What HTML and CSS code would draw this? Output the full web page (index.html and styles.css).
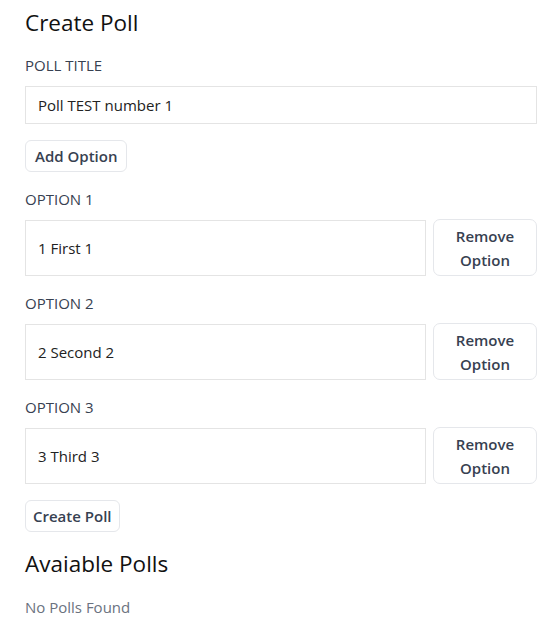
FILE: index.html
```html
<!DOCTYPE html>
<html>
<head>
<meta charset="utf-8">
<link rel="stylesheet" href="styles.css">
</head>
<body>
<main class="page">
  <h1 class="title">Create Poll</h1>
  <div class="field first">
    <label class="label">POLL TITLE</label>
    <div class="input">Poll TEST number 1</div>
  </div>
  <button class="btn wide">Add Option</button>

  <div class="field">
    <label class="label">OPTION 1</label>
    <div class="row">
      <div class="input tall">1 First 1</div>
      <button class="btn remove">Remove<br>Option</button>
    </div>
  </div>
  <div class="field">
    <label class="label">OPTION 2</label>
    <div class="row">
      <div class="input tall">2 Second 2</div>
      <button class="btn remove">Remove<br>Option</button>
    </div>
  </div>
  <div class="field">
    <label class="label">OPTION 3</label>
    <div class="row">
      <div class="input tall">3 Third 3</div>
      <button class="btn remove">Remove<br>Option</button>
    </div>
  </div>
  <button class="btn">Create Poll</button>

  <h2 class="title sub">Avaiable Polls</h2>
  <p class="empty">No Polls Found</p>
</main>
</body>
</html>
```
FILE: styles.css
```css
* { box-sizing: border-box; }
html, body { margin: 0; padding: 0; background: #fff; }
body { font-family: "Open Sans", "Noto Sans", sans-serif; color: #111; }
.page {
  width: 512px;
  margin-left: 25px;
  padding-top: 7px;
  display: flex;
  flex-direction: column;
  align-items: flex-start;
}
.title {
  font-size: 22.5px;
  font-weight: 400;
  line-height: 32px;
  margin: 0;
  color: #111;
}
.sub { margin-top: 16px; }
.field { width: 100%; display: flex; flex-direction: column; margin-top: 16px; }
.field.first { margin-top: 15px; }
.label {
  font-size: 15px;
  line-height: 22px;
  color: #374151;
  margin-bottom: 10px;
}
.input {
  width: 100%;
  height: 38px;
  border: 1px solid #e4e4e4;
  padding: 0 12px;
  display: flex;
  align-items: center;
  font-size: 15px;
  color: #222;
}
.input.tall { height: 56px; flex: 1; }
.row { display: flex; gap: 7px; width: 100%; align-items: stretch; }
.btn {
  font-family: inherit;
  font-size: 15px;
  font-weight: 600;
  color: #374151;
  background: #fff;
  border: 1px solid #e5e7eb;
  border-radius: 6px;
  padding: 0 7px;
  height: 32px;
  margin-top: 16px;
  line-height: 24px;
}
.btn.wide { padding: 0 9px; }
.remove {
  margin-top: -1px;
  height: 57px;
  width: 104px;
  border-radius: 7px;
  flex: none;
}
.empty {
  margin: 16px 0 0;
  font-size: 15px;
  line-height: 22px;
  color: #6b7280;
}
```
